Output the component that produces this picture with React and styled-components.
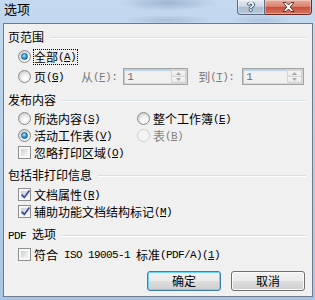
import React from 'react';
import styled, { createGlobalStyle } from 'styled-components';

const Global = createGlobalStyle`
  html, body { margin: 0; padding: 0; }
  body {
    width: 315px; height: 300px; overflow: hidden;
    font-family: "Noto Sans CJK SC", "Liberation Sans", sans-serif;
    font-size: 12px; color: #000;
  }
`;

const Window = styled.div`
  width: 315px; height: 300px; box-sizing: border-box;
  display: flex; flex-direction: column;
  padding: 0 2px 3px 3px;
  background:
    radial-gradient(ellipse 48px 8px at 168px 3px, rgba(80,110,150,0.32), transparent),
    radial-gradient(ellipse 44px 5px at 168px 20px, rgba(80,110,150,0.22), transparent),
    radial-gradient(ellipse 30px 5px at 262px 20px, rgba(80,110,150,0.18), transparent),
    linear-gradient(180deg, #c4d9ef 0%, #b8d0ea 40%, #a9c5e6 100%);
`;

const TitleBar = styled.div`
  height: 23px; display: flex; align-items: flex-start; flex: none;
`;

const Title = styled.div`
  padding: 2px 0 0 1px; font-size: 13px; line-height: 14px; color: #000;
  flex: 1;
`;

const Caption = styled.div`
  display: flex; margin-right: 1px; height: 15px;
`;

const CapBtn = styled.div`
  width: ${p => p.$w}px; height: 15px; box-sizing: border-box;
  display: flex; align-items: center; justify-content: center;
  border: 1px solid ${p => (p.$close ? '#6b2a22' : '#5d6c80')};
  border-top: none;
  ${p => (p.$close ? 'border-left: none;' : '')}
  border-radius: ${p => (p.$close ? '0 0 4px 0' : '0 0 0 4px')};
  background: ${p => (p.$close
    ? 'linear-gradient(180deg, #e9a99a 0%, #dc8672 45%, #c8503d 52%, #d2745f 100%)'
    : 'linear-gradient(180deg, #e4ebf3 0%, #cdd8e6 45%, #aebed2 52%, #b9c8da 100%)')};
  box-shadow: inset 0 0 0 1px rgba(255,255,255,0.35);
`;

const Help = styled.span`
  font-family: "Liberation Sans", sans-serif; font-weight: bold; font-size: 12px;
  line-height: 12px; color: #fff;
  text-shadow: 0 0 1px #2d3440, 1px 0 0 #4a5566, -1px 0 0 #4a5566, 0 1px 0 #4a5566;
`;

const Client = styled.div`
  flex: 1; display: flex; flex-direction: column;
  background: #f0f0f0;
  border: 1px solid #6f7b88;
  padding: 6px 6px 0 4px;
`;

const GroupHeader = styled.div`
  display: flex; align-items: center; height: 14px; line-height: 14px;
  margin-top: ${p => p.$mt || 0}px; gap: 6px;
`;

const Rule = styled.div`
  flex: 1; height: 1px; background: #d5dfe5; box-shadow: 0 1px 0 #ffffff;
`;

const Row = styled.div`
  display: flex; align-items: center;
  height: ${p => p.$h || 17}px;
  margin-top: ${p => p.$mt || 0}px;
  padding-left: 10px;
`;

const TwoCol = styled.div`
  display: grid; grid-template-columns: 119px auto; align-items: center;
  height: 17px; margin-top: ${p => p.$mt || 0}px; padding-left: 10px;
`;

const Option = styled.div`
  display: flex; align-items: center;
`;

const Radio = styled.span`
  width: 13px; height: 13px; box-sizing: border-box; border-radius: 50%; flex: none;
  border: 1px solid ${p => (p.$disabled ? '#cfcfcf' : '#8a8a8a')};
  background: ${p => (p.$disabled
    ? '#f4f4f4'
    : 'radial-gradient(circle at 60% 65%, #ffffff 0%, #f3f3f3 35%, #d2d2d2 75%, #e8e8e8 100%)')};
  display: flex; align-items: center; justify-content: center;
  &::after {
    content: ''; width: 7px; height: 7px; box-sizing: border-box; border-radius: 50%;
    border: 1px solid #1a5d93;
    background: radial-gradient(circle at 40% 35%, #c4ecfd 0%, #3aa0dd 45%, #0e5796 100%);
    display: ${p => (p.$checked ? 'block' : 'none')};
  }
`;

const Box = styled.span`
  width: 13px; height: 13px; box-sizing: border-box; flex: none;
  border: 1px solid #8e8f8f; background: #f7f7f7; padding: 2px;
  display: flex;
`;

const BoxFill = styled.span`
  flex: 1; display: flex; align-items: center; justify-content: center;
  background: linear-gradient(135deg, #c9ccd1 0%, #e4e6e9 55%, #f9f9f9 100%);
  overflow: visible;
`;

const Text = styled.span`
  display: inline-flex; align-items: center; height: 14px; line-height: 14px;
  margin-left: 2px; padding-right: 1px; white-space: pre;
  border: 1px dotted ${p => (p.$focus ? '#000' : 'transparent')};
  color: ${p => (p.$disabled ? '#838383' : '#000')};
`;

const Plain = styled.span`
  display: inline-flex; align-items: center; height: 14px; line-height: 14px;
  white-space: pre; margin-left: ${p => p.$ml || 0}px;
  color: ${p => (p.$disabled ? '#7a7a7a' : '#000')};
`;

const Lat = styled.span`
  font-family: "Liberation Mono", "DejaVu Sans Mono", monospace; font-size: 11px;
  letter-spacing: -0.6px;
  white-space: pre;
`;

const U = styled.span`
  text-decoration: underline; text-underline-offset: 1px;
`;

const Key = ({ k, tail = '' }) => (
  <Lat>(<U>{k}</U>){tail}</Lat>
);

const Field = styled.div`
  width: ${p => p.$w}px; height: 17px; box-sizing: border-box; flex: none;
  margin-left: ${p => p.$ml}px;
  border: 1px solid #a2a2a2; background: #f0f0f0; display: flex;
  box-shadow: inset 0 0 0 1px #d9d9d9;
`;

const FieldText = styled.span`
  flex: 1; padding-left: 3px; padding-top: 1px; color: #6d6d6d;
  font-family: "Liberation Mono", monospace; font-size: 11px; line-height: 14px;
  box-shadow: inset 0 2px 0 #b9d1ea, inset 1px 0 0 #c8c8c8;
`;

const Spin = styled.div`
  width: 16px; display: flex; flex-direction: column; padding: 1px 1px 1px 0;
  box-sizing: border-box;
`;

const SpinHalf = styled.div`
  flex: 1; display: flex; align-items: center; justify-content: center;
  border: 1px solid #d3d3d3; background: linear-gradient(180deg, #f6f6f6, #e9e9e9);
  & + & { border-top: none; }
`;

const Arrow = ({ up }) => (
  <svg width="5" height="3" viewBox="0 0 5 3">
    <path d={up ? 'M0 3 L2.5 0 L5 3 Z' : 'M0 0 L5 0 L2.5 3 Z'} fill="#a8a8a8" />
  </svg>
);

const SpinField = ({ w, ml }) => (
  <Field $w={w} $ml={ml}>
    <FieldText>1</FieldText>
    <Spin>
      <SpinHalf><Arrow up /></SpinHalf>
      <SpinHalf><Arrow /></SpinHalf>
    </Spin>
  </Field>
);

const ButtonRow = styled.div`
  display: flex; justify-content: flex-end; gap: 10px;
  margin-top: 8px; padding-right: 1px;
`;

const Button = styled.div`
  width: 74px; height: 20px; box-sizing: border-box;
  display: flex; align-items: center; justify-content: center;
  border: 1px solid ${p => (p.$default ? '#3c7fb1' : '#707070')};
  border-radius: 3px;
  background: linear-gradient(180deg, #f2f2f2 0%, #ebebeb 48%, #dddddd 52%, #cfcfcf 100%);
  box-shadow: inset 0 0 0 1px ${p => (p.$default ? '#6cd3f8' : '#fbfbfb')};
  line-height: 14px;
`;

const Check = () => (
  <svg width="9" height="9" viewBox="0 0 9 9" style={{ overflow: 'visible' }}>
    <path d="M0.6 4.6 L3.3 7.4 L8.4 0.6" fill="none" stroke="#3b4f96" strokeWidth="1.7" />
  </svg>
);

const CheckBox = ({ checked }) => (
  <Box><BoxFill>{checked && <Check />}</BoxFill></Box>
);

export default function App() {
  return (
    <>
      <Global />
      <Window>
        <TitleBar>
          <Title>选项</Title>
          <Caption>
            <CapBtn $w={28}><Help>?</Help></CapBtn>
            <CapBtn $w={47} $close>
              <svg width="13" height="10" viewBox="0 0 13 10">
                <polygon
                  points="1,0.5 4,0.5 6.5,3 9,0.5 12,0.5 8.2,5 12,9.5 9,9.5 6.5,7 4,9.5 1,9.5 4.8,5"
                  fill="#fff" stroke="#4a2a26" strokeWidth="0.9" strokeLinejoin="round" />
              </svg>
            </CapBtn>
          </Caption>
        </TitleBar>
        <Client>
          <GroupHeader><span>页范围</span><Rule /></GroupHeader>
          <Row $mt={4}>
            <Radio $checked />
            <Text $focus>全部<Key k="A" /></Text>
          </Row>
          <Row $mt={2} $h={19}>
            <Radio />
            <Text>页<Key k="G" /></Text>
            <Plain $ml={15} $disabled>从<Key k="F" tail=":" /></Plain>
            <SpinField w={65} ml={6} />
            <Plain $ml={10} $disabled>到<Key k="T" tail=":" /></Plain>
            <SpinField w={62} ml={8} />
          </Row>

          <GroupHeader $mt={7}><span>发布内容</span><Rule /></GroupHeader>
          <TwoCol $mt={3}>
            <Option><Radio /><Text>所选内容<Key k="S" /></Text></Option>
            <Option><Radio /><Text>整个工作簿<Key k="E" /></Text></Option>
          </TwoCol>
          <TwoCol>
            <Option><Radio $checked /><Text>活动工作表<Key k="V" /></Text></Option>
            <Option><Radio $disabled /><Text $disabled>表<Key k="B" /></Text></Option>
          </TwoCol>
          <Row>
            <CheckBox />
            <Text>忽略打印区域<Key k="O" /></Text>
          </Row>

          <GroupHeader $mt={7}><span>包括非打印信息</span><Rule /></GroupHeader>
          <Row $mt={4}>
            <CheckBox checked />
            <Text>文档属性<Key k="R" /></Text>
          </Row>
          <Row>
            <CheckBox checked />
            <Text>辅助功能文档结构标记<Key k="M" /></Text>
          </Row>

          <GroupHeader $mt={8}><span><Lat>PDF </Lat>选项</span><Rule /></GroupHeader>
          <Row $mt={4}>
            <CheckBox />
            <Text>符合<Lat> ISO 19005-1 </Lat>标准<Lat>(PDF/A)(<U>1</U>)</Lat></Text>
          </Row>

          <ButtonRow>
            <Button $default>确定</Button>
            <Button>取消</Button>
          </ButtonRow>
        </Client>
      </Window>
    </>
  );
}
